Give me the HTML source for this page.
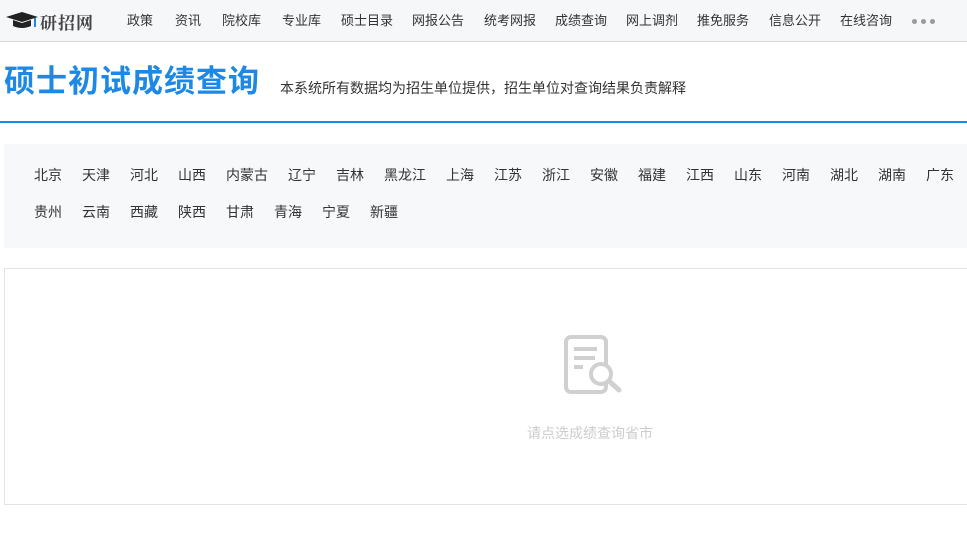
<!DOCTYPE html>
<html><head><meta charset="utf-8"><style>
*{margin:0;padding:0;box-sizing:border-box}
body{width:967px;height:546px;background:#fff;font-family:"Liberation Sans","Noto Sans CJK SC",sans-serif;position:relative;overflow:hidden;color:#333}
.hd{position:absolute;left:0;top:0;width:967px;height:42px;background:#f6f7f9;border-bottom:1px solid #d6d8dc}
.logo{position:absolute;left:40px;top:9px;font-family:"Noto Serif CJK SC",serif;font-weight:bold;font-size:17px;color:#444;letter-spacing:1px}
.nav a{position:absolute;top:13px;font-size:13px;color:#333;text-decoration:none;line-height:16px}
.dots{position:absolute;left:912px;top:19px;display:flex;height:5px}
.dots i{display:block;width:5px;height:5px;border-radius:50%;background:#999;margin-right:4px}
.title{position:absolute;left:4px;top:62px;font-size:31px;font-weight:bold;color:#1e88e5;letter-spacing:1px;line-height:40px}
.sub{position:absolute;left:280px;top:78px;font-size:14px;color:#333}
.line{position:absolute;left:0;top:121px;width:967px;height:2px;background:#1e88e5}
.prov{position:absolute;left:4px;top:144px;width:963px;height:104px;background:#f6f8fa}
.prov span{position:absolute;font-size:14px;color:#333;line-height:18px}
.box{position:absolute;left:4px;top:268px;width:970px;height:237px;border:1px solid #e3e3e3}
.tip{position:absolute;left:527px;top:423px;font-size:14px;color:#ccc}
</style></head><body>
<div class="hd">
<svg style="position:absolute;left:5px;top:11px" width="34" height="20" viewBox="0 0 34 20"><path d="M1 6 L17 1 L33 6 L17 11Z" fill="#222"/><path d="M8 9 L8 15 Q17 19 26 15 L26 9 L17 12Z" fill="#222"/><path d="M30 7 L30 16" stroke="#1e88e5" stroke-width="2"/></svg>
<div class="logo">研招网</div>
<div class="nav">
<a style="left:127px">政策</a><a style="left:175px">资讯</a><a style="left:222px">院校库</a><a style="left:282px">专业库</a><a style="left:341px">硕士目录</a><a style="left:412px">网报公告</a><a style="left:484px">统考网报</a><a style="left:555px">成绩查询</a><a style="left:626px">网上调剂</a><a style="left:697px">推免服务</a><a style="left:769px">信息公开</a><a style="left:840px">在线咨询</a>
</div>
<div class="dots"><i></i><i></i><i></i></div>
</div>
<div class="title">硕士初试成绩查询</div>
<div class="sub">本系统所有数据均为招生单位提供，招生单位对查询结果负责解释</div>
<div class="line"></div>
<div class="prov">
<span style="left:30px;top:22px">北京</span><span style="left:78px;top:22px">天津</span><span style="left:126px;top:22px">河北</span><span style="left:174px;top:22px">山西</span><span style="left:222px;top:22px">内蒙古</span><span style="left:284px;top:22px">辽宁</span><span style="left:332px;top:22px">吉林</span><span style="left:380px;top:22px">黑龙江</span><span style="left:442px;top:22px">上海</span><span style="left:490px;top:22px">江苏</span><span style="left:538px;top:22px">浙江</span><span style="left:586px;top:22px">安徽</span><span style="left:634px;top:22px">福建</span><span style="left:682px;top:22px">江西</span><span style="left:730px;top:22px">山东</span><span style="left:778px;top:22px">河南</span><span style="left:826px;top:22px">湖北</span><span style="left:874px;top:22px">湖南</span><span style="left:922px;top:22px">广东</span>
<span style="left:30px;top:59px">贵州</span><span style="left:78px;top:59px">云南</span><span style="left:126px;top:59px">西藏</span><span style="left:174px;top:59px">陕西</span><span style="left:222px;top:59px">甘肃</span><span style="left:270px;top:59px">青海</span><span style="left:318px;top:59px">宁夏</span><span style="left:366px;top:59px">新疆</span>
</div>
<div class="box"></div>
<svg style="position:absolute;left:563px;top:334px" width="64" height="62" viewBox="0 0 64 62"><rect x="3" y="3" width="40" height="55" rx="5" fill="none" stroke="#d0d0d0" stroke-width="4"/><path d="M11 15 H34 M11 24 H32 M11 33 H20" stroke="#d0d0d0" stroke-width="4"/><circle cx="38" cy="40" r="10" fill="#fff" stroke="#d0d0d0" stroke-width="4"/><path d="M46 47 L56 56" stroke="#d0d0d0" stroke-width="5" stroke-linecap="round"/></svg>
<div class="tip">请点选成绩查询省市</div>
</body></html>
